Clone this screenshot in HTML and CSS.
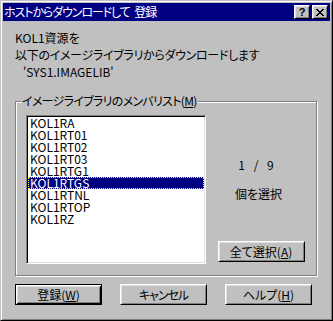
FILE: index.html
```html
<!DOCTYPE html>
<html lang="ja">
<head>
    <meta charset="UTF-8">
    <title>ホストからダウンロードして 登録</title>
    <link rel="stylesheet" href="styles.css">
</head>
<body>
    <div class="window">
        <div class="titlebar">
            <span class="title">ホストからダウンロードして 登録</span>
            <span class="tb-btn">?</span>
            <span class="tb-btn">
                <svg width="8" height="7" viewBox="0 0 8 7" shape-rendering="crispEdges">
                    <path d="M0 0h2v1H0zM6 0h2v1H6zM1 1h2v1H1zM5 1h2v1H5zM2 2h4v1H2zM3 3h2v1H3zM2 4h4v1H2zM1 5h2v1H1zM5 5h2v1H5zM0 6h2v1H0zM6 6h2v1H6z" fill="#000"/>
                </svg>
            </span>
        </div>

        <div class="content">
            <div class="intro">
                <p>KOL1資源を</p>
                <p class="long">以下のイメージライブラリからダウンロードします</p>
                <p class="libname">'SYS1.IMAGELIB'</p>
            </div>

            <div class="group">
                <span class="group-label">イメージライブラリのメンバリスト(<u>M</u>)</span>
                <ul class="listbox">
                    <li>KOL1RA</li>
                    <li>KOL1RT01</li>
                    <li>KOL1RT02</li>
                    <li>KOL1RT03</li>
                    <li>KOL1RTG1</li>
                    <li class="selected">KOL1RTGS</li>
                    <li>KOL1RTNL</li>
                    <li>KOL1RTOP</li>
                    <li>KOL1RZ</li>
                </ul>
                <div class="side">
                    <div class="count">1 / 9</div>
                    <div class="count-label">個を選択</div>
                    <button class="btn btn-all">全て選択(<u>A</u>)</button>
                </div>
            </div>

            <div class="actions">
                <button class="btn btn-default">登録(<u>W</u>)</button>
                <button class="btn btn-cancel">キャンセル</button>
                <button class="btn">ヘルプ(<u>H</u>)</button>
            </div>
        </div>
    </div>
</body>
</html>
```

FILE: styles.css
```css
* {
    margin: 0;
    padding: 0;
    box-sizing: border-box;
}

body {
    background-color: #c0c0c0;
    font-family: "Noto Sans CJK JP", "Noto Sans", sans-serif;
    font-size: 12px;
    font-feature-settings: "palt";
    color: #000;
}

.window {
    width: 333px;
    height: 321px;
    display: flex;
    flex-direction: column;
    padding: 2px;
    background-color: #c0c0c0;
    border: 1px solid;
    border-color: #c0c0c0 #000 #000 #c0c0c0;
    box-shadow: inset 1px 1px #fff, inset -1px -1px #808080;
}

.titlebar {
    height: 18px;
    display: flex;
    align-items: center;
    gap: 2px;
    padding: 0 2px 0 1px;
    background-color: #000080;
    color: #fff;
}

.title {
    flex: 1;
    line-height: 16px;
    letter-spacing: -1.1px;
    word-spacing: 3px;
}

.tb-btn {
    width: 16px;
    height: 14px;
    display: flex;
    justify-content: center;
    align-items: center;
    background-color: #c0c0c0;
    border: 1px solid;
    border-color: #fff #000 #000 #fff;
    box-shadow: inset 1px 1px #dfdfdf, inset -1px -1px #808080;
    font-family: "Liberation Sans", sans-serif;
    font-weight: bold;
    font-size: 11px;
    line-height: 12px;
    color: #000;
}

.content {
    flex: 1;
    display: flex;
    flex-direction: column;
    padding-left: 12px;
}

.intro {
    padding-top: 8px;
    line-height: 17px;
}

.long {
    letter-spacing: -0.3px;
}

.libname {
    padding-left: 8px;
}

.group {
    position: relative;
    width: 302px;
    height: 175px;
    margin-top: 21px;
    display: flex;
    padding: 13px 0 0 10px;
    border: 1px solid #808080;
    box-shadow: inset 1px 1px #fff, 1px 1px #fff;
}

.group-label {
    position: absolute;
    top: -8px;
    left: 5px;
    padding: 0 1px;
    line-height: 13px;
    letter-spacing: -0.7px;
    background-color: #c0c0c0;
}

.listbox {
    list-style: none;
    width: 180px;
    height: 149px;
    background-color: #fff;
    border: 1px solid;
    border-color: #808080 #fff #fff #808080;
    box-shadow: inset 1px 1px #000, inset -1px -1px #dfdfdf;
    padding: 1px 1px 0 1px;
}

.listbox li {
    height: 12px;
    line-height: 12px;
    padding-left: 2px;
}

.listbox .selected {
    background-color: #000080;
    color: #fff;
    outline: 1px dotted #ffff00;
    outline-offset: -1px;
}

.side {
    flex: 1;
    display: flex;
    flex-direction: column;
    align-items: center;
}

.count {
    margin-top: 43px;
    margin-right: 10px;
    line-height: 13px;
    word-spacing: 6px;
}

.count-label {
    margin-top: 16px;
    margin-right: 5px;
    line-height: 13px;
}

.btn {
    width: 87px;
    height: 21px;
    background-color: #c0c0c0;
    border: 1px solid;
    border-color: #fff #000 #000 #fff;
    box-shadow: inset 1px 1px #dfdfdf, inset -1px -1px #808080;
    font: inherit;
    font-feature-settings: "palt";
    line-height: 15px;
    color: #000;
}

.btn-all {
    margin-top: 41px;
}

.actions {
    display: flex;
    gap: 18px;
    margin-top: 8px;
}

.btn-default {
    border-color: #000;
    box-shadow: inset 1px 1px #fff, inset -1px -1px #000, inset 2px 2px #dfdfdf, inset -2px -2px #808080;
}

.btn-cancel {
    letter-spacing: -1px;
}
```
